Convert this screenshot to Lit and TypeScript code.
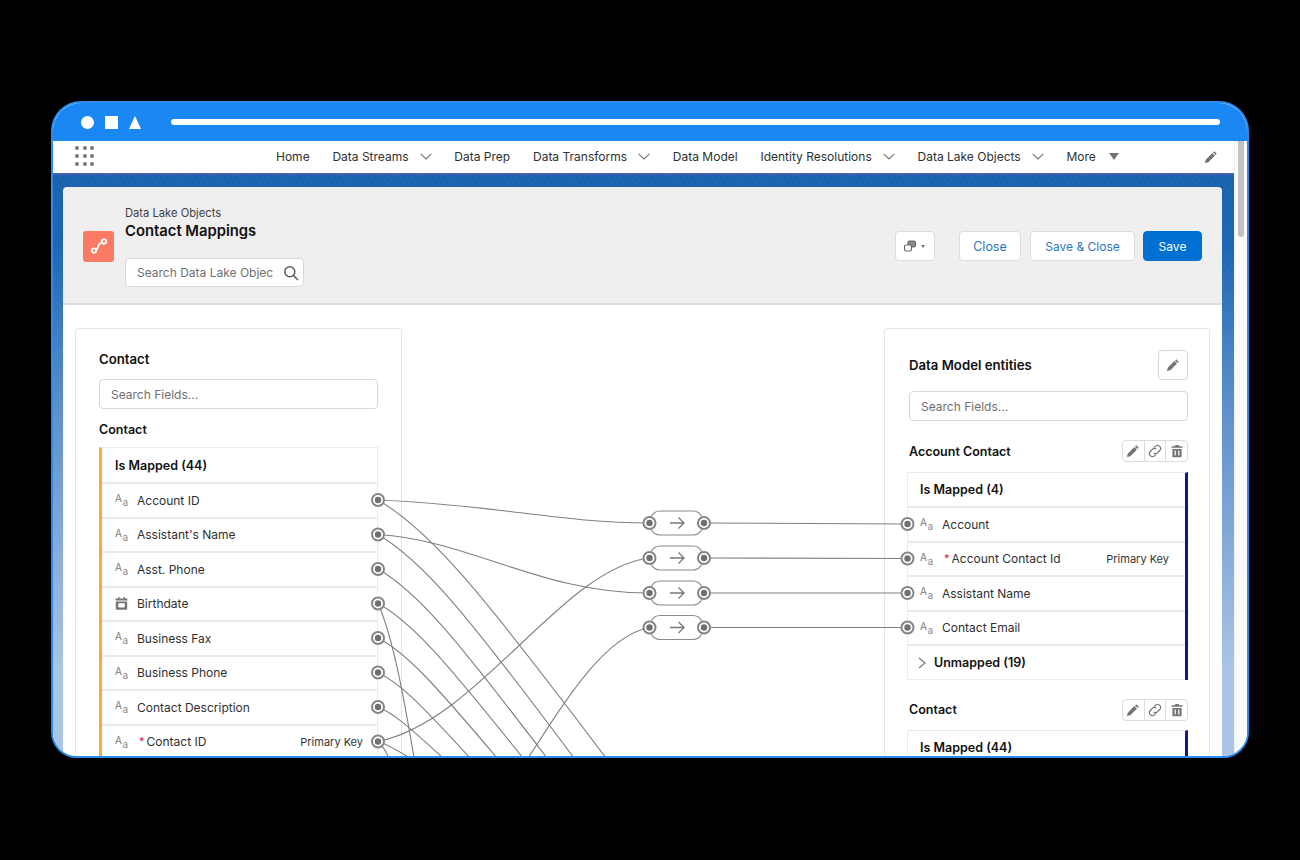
import { LitElement, html, css, svg } from "lit";
import { customElement } from "lit/decorators.js";

const pencil = html`<svg viewBox="0 0 14 14" width="14" height="14"><path d="M10.2 1.2l2.6 2.6-1.2 1.2L9 2.4zM8.3 3.1l2.6 2.6-6.6 6.6-3.4.8.8-3.4z" fill="#747474"/></svg>`;
const link = html`<svg viewBox="0 0 14 14" width="14" height="14" fill="none" stroke="#747474" stroke-width="1.2"><path d="M6 3.6l1.6-1.5a2.6 2.6 0 0 1 3.8 0l.5.5a2.6 2.6 0 0 1 0 3.7L9.4 8.8a2.6 2.6 0 0 1-3.7 0"/><path d="M8 10.4l-1.6 1.5a2.6 2.6 0 0 1-3.8 0l-.5-.5a2.6 2.6 0 0 1 0-3.7l2.5-2.5a2.6 2.6 0 0 1 3.7 0"/></svg>`;
const trash = html`<svg viewBox="0 0 14 14" width="14" height="14"><path d="M5.2 1h3.6v1.3h3.7v1.4h-11V2.3h3.7zM2.4 5h9.2v7.2c0 .6-.4 1-1 1H3.4c-.6 0-1-.4-1-1zM4.6 6.6v5h1.2v-5zm3.6 0v5h1.2v-5z" fill="#747474"/></svg>`;
const chevronDown = html`<svg class="chev" viewBox="0 0 12 7" width="12" height="7" fill="none" stroke="#747474" stroke-width="1.1"><path d="M.6.8L6 6l5.4-5.2"/></svg>`;

const aa = html`<span class="aa"><span>A</span><span>a</span></span>`;
const cal = html`<svg class="typeicon" viewBox="0 0 13 13" width="13" height="13"><path d="M3 0h1.4v1.4h4.2V0H10v1.4h2.4v2.2H.6V1.4H3zM.8 4.6h11.4v7.4c0 .5-.3.8-.8.8H1.6c-.5 0-.8-.3-.8-.8zm3.2 1.6c-.5 0-.8.3-.8.8v2.6c0 .5.3.8.8.8h5c.5 0 .8-.3.8-.8V7c0-.5-.3-.8-.8-.8z" fill="#757575"/></svg>`;

interface Field { name: string; req?: boolean; pk?: boolean; date?: boolean; }

const leftFields: Field[] = [
  { name: "Account ID" },
  { name: "Assistant's Name" },
  { name: "Asst. Phone" },
  { name: "Birthdate", date: true },
  { name: "Business Fax" },
  { name: "Business Phone" },
  { name: "Contact Description" },
  { name: "Contact ID", req: true, pk: true },
];
const rightFields: Field[] = [
  { name: "Account" },
  { name: "Account Contact Id", req: true, pk: true },
  { name: "Assistant Name" },
  { name: "Contact Email" },
];
const navItems = [
  { t: "Home" },
  { t: "Data Streams", c: true },
  { t: "Data Prep" },
  { t: "Data Transforms", c: true },
  { t: "Data Model" },
  { t: "Identity Resolutions", c: true },
  { t: "Data Lake Objects", c: true },
];

// Falling connectors: [start y, x where they leave the frame at y=758]
const falling: [number, number][] = [
  [500, 606], [534.5, 574], [569, 547], [603.5, 523], [638, 497], [672.5, 470], [707, 443], [741.5, 410],
];
const fallingPath = ([y0, xe]: [number, number]) => {
  const w = xe - 378, h = 758 - y0, f = (v: number) => v.toFixed(1);
  return `M378 ${y0}C${f(378 + 0.228 * w)} ${f(y0 + 0.117 * h)} ${f(378 + 0.447 * w)} ${f(y0 + 0.35 * h)} ${xe} 758`;
};
const otherPaths = [
  "M378 500C500 505 560 523 649 523",
  "M378 534.5C470 540 540 593 649 593",
  "M378 741.5C480 720 560 570 649 558",
  "M480 830C545 740 590 640 649 627.5",
  "M378 603.5C392 635 403 690 416 770",
  "M378 741.5C383 746 387 752 392 766",
  "M704 523L907 524",
  "M704 558L907 558.5",
  "M704 593L907 593",
  "M704 627.5L907 627.5",
];
const pillYs = [523, 558, 593, 627.5];
const leftYs = [500, 534.5, 569, 603.5, 638, 672.5, 707, 741.5];
const rightYs = [524, 558.5, 593, 627.5];

const dot = (x: number, y: number) => svg`<circle cx=${x} cy=${y} r="6" fill="#fff" stroke="#858585" stroke-width="2"/><circle cx=${x} cy=${y} r="3.2" fill="#707070"/>`;

@customElement("app-root")
export class AppRoot extends LitElement {
  static styles = css`
    :host { display: block; width: 1300px; height: 860px; background: #000; font-family: Inter, "Liberation Sans", sans-serif; color: #2e2e2e; font-size: 12px; padding-top: 101px; box-sizing: border-box; overflow: hidden; }
    * { box-sizing: border-box; }
    .frame { position: relative; width: 1198px; height: 657px; margin-left: 51px; border: 2px solid #2a8cec; border-radius: 30px 30px 26px 26px; overflow: hidden; display: flex; flex-direction: column; background: #fff; }
    .titlebar { height: 38px; flex: none; background: #1b87f2; display: flex; align-items: center; padding: 0 27px 0 28px; }
    .shapes { display: flex; align-items: center; gap: 11px; width: 90px; flex: none; }
    .circle { width: 13px; height: 13px; border-radius: 50%; background: #fff; }
    .square { width: 13px; height: 13px; background: #fff; }
    .tri { width: 0; height: 0; border-left: 6.5px solid transparent; border-right: 6.5px solid transparent; border-bottom: 13px solid #fff; }
    .urlbar { flex: 1; height: 6.5px; border-radius: 3px; background: #fff; }
    .body { flex: 1; display: flex; min-height: 0; }
    .main { width: 1181px; flex: none; display: flex; flex-direction: column; min-height: 0; }
    .track { flex: 1; background: #fafafa; border-left: 1px solid #eee; padding-left: 3px; }
    .thumb { width: 6px; height: 96px; background: #c2c2c4; border-radius: 0 0 3px 3px; }
    nav { height: 32px; flex: none; display: flex; align-items: center; background: #fff; padding: 0 16px 2px 22px; }
    .grid { display: grid; grid-template-columns: repeat(3, 4px); grid-auto-rows: 4px; gap: 3.6px; width: 20px; flex: none; margin-right: 181px; }
    .grid i { background: #767676; border-radius: 50%; }
    .navitems { display: flex; gap: 22.8px; align-items: center; }
    .navitem { display: flex; align-items: center; gap: 11px; color: #303030; font-size: 12px; }
    .navitem.more { gap: 13px; }
    .down { width: 0; height: 0; border-left: 5px solid transparent; border-right: 5px solid transparent; border-top: 7px solid #747474; }
    .navpencil { margin: 2px 0 0 auto; display: flex; }
    .bg { flex: 1; min-height: 0; display: flex; flex-direction: column; padding: 12px 12px 0 10px; background: repeating-linear-gradient(60deg, rgba(255,255,255,.035) 0 1px, transparent 1px 5px), linear-gradient(180deg, #1a62ad 0, #1b66b4 12%, #5c8fcb 40%, #a9c4e4 85%); border-top: 2px solid #4c5fb4; }
    .head { height: 118px; flex: none; background: #f0eff0; border-radius: 4px 4px 0 0; border-bottom: 2px solid #dcdcdc; display: flex; align-items: center; padding: 0 20px; }
    .appicon { width: 31px; height: 31px; border-radius: 3px; background: #fb7a64; display: flex; align-items: center; justify-content: center; margin-right: 11px; flex: none; margin-top: 2px; }
    .headtext { display: flex; flex-direction: column; margin-top: 3px; }
    .crumb { font-size: 11.2px; color: #3f3f3f; line-height: 14px; }
    .title { font-size: 14.8px; font-weight: 600; color: #111; line-height: 22px; }
    .hsearch { margin-top: 16px; width: 179px; height: 29px; background: #fff; border: 1px solid #d8d8dc; border-radius: 4px; display: flex; align-items: center; justify-content: space-between; padding: 0 4px 0 11px; color: #6f6f6f; font-size: 12px; white-space: nowrap; overflow: hidden; }
    .actions { margin: 2px 0 0 auto; display: flex; align-items: center; }
    .btn { height: 30px; display: flex; align-items: center; justify-content: center; background: #fff; border: 1px solid #dcdcdf; border-radius: 4px; color: #2b77bd; font-size: 12px; }
    .toggle { width: 40px; gap: 4px; margin-right: 24px; padding-right: 3px; }
    .toggle i { width: 0; height: 0; border-left: 2.5px solid transparent; border-right: 2.5px solid transparent; border-top: 3px solid #747474; }
    .close { width: 62px; margin-right: 9px; font-size: 12.5px; }
    .saveclose { width: 105px; margin-right: 8px; }
    .save { width: 59px; background: #0070d2; border-color: #0070d2; color: #fff; }
    .panel { flex: 1; min-height: 0; background: #fff; padding: 23px 12px 0; display: flex; justify-content: space-between; overflow: hidden; }
    .card { border: 1px solid #e6e6ea; border-radius: 4px 4px 0 0; border-bottom: 0; flex: none; }
    .left { width: 327px; padding: 21px 23px 0; }
    .right { width: 326px; padding: 21px 21px 0 24px; }
    .cardtitle { font-size: 12.5px; font-weight: 600; color: #111; line-height: 18px; }
    .lead { font-size: 13.2px; }
    .search { height: 30px; border: 1px solid #d8d8dc; border-radius: 4px; display: flex; align-items: center; padding: 0 11px; color: #6f6f6f; font-size: 12px; background: #fff; }
    .left .search { margin-top: 11px; }
    .left .sub { margin: 12px 0 8px; }
    .list { font-size: 12px; }
    .left .list { border-left: 3px solid #f4ab3a; border-top: 1px solid #ececf0; border-right: 1px solid #ececf0; }
    .right .list { width: 281px; margin-left: -2px; border-right: 3px solid #14148c; border-top: 1px solid #e8e8ec; border-left: 1px solid #ececf0; }
    .row { height: 34.5px; display: flex; align-items: center; border-bottom: 2px solid #e8e8ed; padding-left: 13px; color: #303030; }
    .right .row { padding-left: 12px; padding-right: 16px; }
    .left .row { padding-right: 14px; }
    .row.group { font-weight: 600; color: #111; font-size: 12.5px; }
    .left .row.group { height: 36px; }
    .right .row.group { height: 35px; }
    .right .row.group.last { height: 34px; }
    .row.last { border-bottom: 1px solid #ececf0; }
    .row .gt { margin: 0 8px 0 -2px; display: flex; }
    .aa { width: 13px; height: 14px; display: flex; justify-content: space-between; color: #7a7a7a; font-size: 10px; line-height: 10px; flex: none; }
    .aa span:last-child { align-self: flex-end; color: #8a8a8a; }
    .typeicon { flex: none; }
    .name { margin-left: 9px; display: flex; }
    .req { color: #d4213d; margin: 0 2px 0 2px; font-size: 11px; }
    .pk { margin-left: auto; font-size: 11px; color: #333; }
    .rthead { display: flex; justify-content: space-between; align-items: center; height: 30px; }
    .rthead .iconbtn { width: 30px; height: 30px; border: 1px solid #d8d8dc; border-radius: 4px; display: flex; align-items: center; justify-content: center; }
    .right .search { margin-top: 11px; }
    .enthead { display: flex; justify-content: space-between; align-items: center; height: 22px; }
    .enthead.first { margin: 19px 0 10px; }
    .enthead.first .cardtitle { margin-top: 2px; }
    .enthead.second { margin: 19px 0 9px; }
    .group3 { display: flex; border: 1px solid #dcdcdf; border-radius: 4px; height: 22px; width: 66px; }
    .group3 span { flex: 1; display: flex; align-items: center; justify-content: center; border-right: 1px solid #dcdcdf; }
    .group3 span:last-child { border-right: 0; }
    .overlay { position: absolute; left: 0; top: 0; pointer-events: none; }
    .overlay path { fill: none; stroke: #808080; stroke-width: 1.1; }
    .overlay .pill { stroke: #8a8a8a; }
    .overlay .arrow { stroke: #777; stroke-width: 1.3; }
  `;

  private fieldRow(f: Field, last = false) {
    return html`<div class="row ${last ? "last" : ""}">
      ${f.date ? cal : aa}
      <span class="name">${f.req ? html`<span class="req">*</span>` : ""}${f.name}</span>
      ${f.pk ? html`<span class="pk">Primary Key</span>` : ""}
    </div>`;
  }

  private tools() {
    return html`<div class="group3"><span>${pencil}</span><span>${link}</span><span>${trash}</span></div>`;
  }

  render() {
    return html`<div class="frame">
      <div class="titlebar">
        <div class="shapes"><div class="circle"></div><div class="square"></div><div class="tri"></div></div>
        <div class="urlbar"></div>
      </div>
      <div class="body">
        <div class="main">
          <nav>
            <div class="grid">${Array.from({ length: 9 }, () => html`<i></i>`)}</div>
            <div class="navitems">
              ${navItems.map((n) => html`<div class="navitem">${n.t}${n.c ? chevronDown : ""}</div>`)}
              <div class="navitem more">More<span class="down"></span></div>
            </div>
            <div class="navpencil">${pencil}</div>
          </nav>
          <div class="bg">
            <div class="head">
              <div class="appicon">
                <svg viewBox="0 0 20 20" width="20" height="20" fill="none" stroke="#fff" stroke-width="1.8"><circle cx="5" cy="14.5" r="2.2"/><circle cx="15" cy="5.5" r="2.2"/><path d="M7 13.5c1.5-.4 1.6-1.4 2-2.8s1-2.8 2.6-3.6c.4-.2.7-.3 1.2-.4"/></svg>
              </div>
              <div class="headtext">
                <div class="crumb">Data Lake Objects</div>
                <div class="title">Contact Mappings</div>
                <div class="hsearch">Search Data Lake Objec
                  <svg viewBox="0 0 16 16" width="16" height="16" fill="none" stroke="#5c5c5c" stroke-width="1.5"><circle cx="6.8" cy="6.8" r="5"/><path d="M10.5 10.5l4.5 4.5"/></svg>
                </div>
              </div>
              <div class="actions">
                <div class="btn toggle">
                  <svg viewBox="0 0 14 14" width="14" height="14" fill="none" stroke="#6a6a6a" stroke-width="1.2"><rect x="5" y="2" width="7.5" height="6" rx="1.5" fill="#8a8a8a"/><rect x="1.5" y="6" width="7" height="6" rx="1.5" fill="#fff"/></svg><i></i>
                </div>
                <div class="btn close">Close</div>
                <div class="btn saveclose">Save &amp; Close</div>
                <div class="btn save">Save</div>
              </div>
            </div>
            <div class="panel">
              <div class="card left">
                <div class="cardtitle lead">Contact</div>
                <div class="search">Search Fields...</div>
                <div class="cardtitle sub">Contact</div>
                <div class="list">
                  <div class="row group">Is Mapped (44)</div>
                  ${leftFields.map((f) => this.fieldRow(f))}
                </div>
              </div>
              <div class="card right">
                <div class="rthead">
                  <div class="cardtitle lead">Data Model entities</div>
                  <div class="iconbtn">${pencil}</div>
                </div>
                <div class="search">Search Fields...</div>
                <div class="enthead first"><div class="cardtitle">Account Contact</div>${this.tools()}</div>
                <div class="list">
                  <div class="row group">Is Mapped (4)</div>
                  ${rightFields.map((f) => this.fieldRow(f))}
                  <div class="row group last"><span class="gt"><svg viewBox="0 0 8 12" width="8" height="12" fill="none" stroke="#747474" stroke-width="1.1"><path d="M1 1l6 5-6 5"/></svg></span>Unmapped (19)</div>
                </div>
                <div class="enthead second"><div class="cardtitle">Contact</div>${this.tools()}</div>
                <div class="list">
                  <div class="row group">Is Mapped (44)</div>
                </div>
              </div>
            </div>
          </div>
        </div>
        <div class="track"><div class="thumb"></div></div>
      </div>
      <svg class="overlay" width="1194" height="653" viewBox="53 103 1194 653">
        ${falling.map((f) => svg`<path d=${fallingPath(f)}/>`)}
        ${otherPaths.map((d) => svg`<path d=${d}/>`)}
        ${pillYs.map((y) => svg`
          <path class="pill" d="M651 ${y - 6}Q654 ${y - 12} 660 ${y - 12}H693Q699 ${y - 12} 702 ${y - 6}M651 ${y + 6}Q654 ${y + 12} 660 ${y + 12}H693Q699 ${y + 12} 702 ${y + 6}"/>
          <path class="arrow" d="M670 ${y}H684M678.5 ${y - 5.5}L684 ${y}L678.5 ${y + 5.5}"/>
          ${dot(649.5, y)}${dot(704, y)}`)}
        ${leftYs.map((y) => dot(378, y))}
        ${rightYs.map((y) => dot(907.5, y))}
      </svg>
    </div>`;
  }
}
